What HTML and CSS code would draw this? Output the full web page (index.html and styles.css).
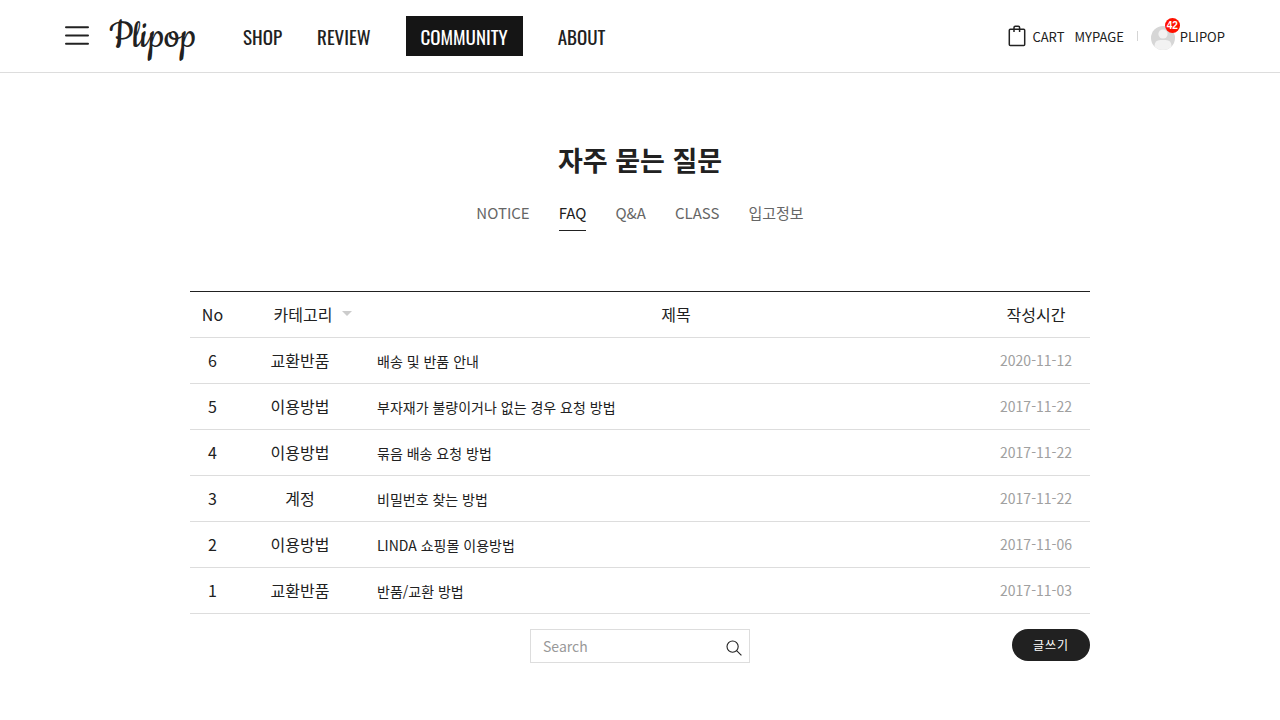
FILE: index.html
```
<!DOCTYPE html>
<html lang="ko">
<head>
    <meta charset="UTF-8">
    <meta name="viewport" content="width=device-width, initial-scale=1.0">
    <title>자주 묻는 질문 - Plipop</title>
    <link rel="stylesheet" href="styles.css">
</head>
<body>

<header class="header">
    <button type="button" class="menu-btn" aria-label="메뉴">
        <svg width="24" height="20" viewBox="0 0 24 20" fill="none" stroke="#222" stroke-width="2" stroke-linecap="round">
            <path d="M1 1.3h22M1 9.5h22M1 17.7h22"/>
        </svg>
    </button>
    <a href="#" class="logo">Plipop</a>
    <nav class="gnb">
        <a href="#">SHOP</a>
        <a href="#">REVIEW</a>
        <a href="#" class="active">COMMUNITY</a>
        <a href="#">ABOUT</a>
    </nav>
    <div class="user-menu">
        <a href="#" class="cart">
            <svg width="18" height="22" viewBox="0 0 18 22" fill="none" stroke="#222" stroke-width="1.5">
                <rect x="1.3" y="4.2" width="15.4" height="16.3" rx="1"/>
                <path d="M6 7V2.4Q6 1.2 7.2 1.2h3.2q1.2 0 1.2 1.2V7"/>
            </svg>
            CART
        </a>
        <a href="#">MYPAGE</a>
        <span class="bar"></span>
        <a href="#" class="profile">
            <span class="avatar">
                <svg width="24" height="24" viewBox="0 0 24 24">
                    <defs><clipPath id="round"><circle cx="12" cy="12" r="12"/></clipPath></defs>
                    <g clip-path="url(#round)">
                        <rect width="24" height="24" fill="#d6d6d6"/>
                        <circle cx="12" cy="8" r="4.6" fill="#f2f2f2"/>
                        <path d="M3.5 24V20q0-6 6-6h5q6 0 6 6v4z" fill="#f2f2f2"/>
                    </g>
                </svg>
                <span class="badge">42</span>
            </span>
            PLIPOP
        </a>
    </div>
</header>

<main class="container">
    <h1>자주 묻는 질문</h1>
    <nav class="tabs">
        <a href="#">NOTICE</a>
        <a href="#" class="active">FAQ</a>
        <a href="#">Q&amp;A</a>
        <a href="#">CLASS</a>
        <a href="#">입고정보</a>
    </nav>

    <table class="board">
        <thead>
            <tr>
                <th class="no">No</th>
                <th class="category"><button type="button" class="sort">카테고리<span class="arrow"></span></button></th>
                <th class="subject">제목</th>
                <th class="date">작성시간</th>
            </tr>
        </thead>
        <tbody>
            <tr>
                <td>6</td>
                <td>교환반품</td>
                <td class="subject"><a href="#">배송 및 반품 안내</a></td>
                <td class="date">2020-11-12</td>
            </tr>
            <tr>
                <td>5</td>
                <td>이용방법</td>
                <td class="subject"><a href="#">부자재가 불량이거나 없는 경우 요청 방법</a></td>
                <td class="date">2017-11-22</td>
            </tr>
            <tr>
                <td>4</td>
                <td>이용방법</td>
                <td class="subject"><a href="#">묶음 배송 요청 방법</a></td>
                <td class="date">2017-11-22</td>
            </tr>
            <tr>
                <td>3</td>
                <td>계정</td>
                <td class="subject"><a href="#">비밀번호 찾는 방법</a></td>
                <td class="date">2017-11-22</td>
            </tr>
            <tr>
                <td>2</td>
                <td>이용방법</td>
                <td class="subject"><a href="#">LINDA 쇼핑몰 이용방법</a></td>
                <td class="date">2017-11-06</td>
            </tr>
            <tr>
                <td>1</td>
                <td>교환반품</td>
                <td class="subject"><a href="#">반품/교환 방법</a></td>
                <td class="date">2017-11-03</td>
            </tr>
        </tbody>
    </table>

    <div class="board-bottom">
        <form class="search">
            <input type="text" placeholder="Search" aria-label="Search">
            <button type="button" aria-label="검색">
                <svg width="16" height="16" viewBox="0 0 16 16" fill="none" stroke="#222" stroke-width="1.1">
                    <circle cx="6.6" cy="6.6" r="5.6"/>
                    <path d="M10.6 10.6l4.8 4.8"/>
                </svg>
            </button>
        </form>
        <button type="button" class="write-btn">글쓰기</button>
    </div>
</main>

</body>
</html>
```
FILE: styles.css
```
* {
    box-sizing: border-box;
    margin: 0;
    padding: 0;
}
body {
    font-family: "Noto Sans CJK KR", sans-serif;
    font-size: 14px;
    color: #212121;
    background: #fff;
}
a {
    color: inherit;
    text-decoration: none;
}
button {
    font-family: inherit;
    color: inherit;
    background: none;
    border: 0;
    cursor: pointer;
}
svg {
    display: block;
}

/* header */
.header {
    display: flex;
    align-items: center;
    height: 73px;
    padding: 0 55px 0 65px;
    border-bottom: 1px solid #ddd;
}
.menu-btn {
    margin-right: 20px;
}
.logo {
    width: 88px;
    margin-right: 46px;
    padding-top: 2px;
    font-family: Cookie, "Liberation Serif", serif;
    font-size: 44px;
    line-height: 40px;
}
.gnb {
    display: flex;
    gap: 35px;
    font-family: Oswald, "Roboto Condensed", "Noto Sans CJK KR", sans-serif;
    font-size: 19px;
    line-height: 40px;
}
.gnb .active {
    padding: 0 15px;
    color: #fff;
    background: #151515;
}
.user-menu {
    display: flex;
    align-items: center;
    margin-left: auto;
    font-size: 13px;
}
.cart {
    display: flex;
    align-items: center;
    gap: 6px;
    margin-right: 10px;
}
.bar {
    width: 1px;
    height: 10px;
    margin: 0 13px;
    background: #d5d5d5;
}
.profile {
    display: flex;
    align-items: center;
    gap: 5px;
}
.avatar {
    position: relative;
    padding-top: 3px;
}
.badge {
    position: absolute;
    top: -5px;
    right: -5px;
    width: 15px;
    height: 15px;
    border-radius: 50%;
    background: #ff1100;
    color: #fff;
    font-family: "Liberation Sans", sans-serif;
    font-size: 10px;
    font-weight: bold;
    line-height: 15px;
    text-align: center;
}

/* content */
.container {
    max-width: 900px;
    margin: 0 auto;
    padding: 66px 0 56px;
}
h1 {
    font-size: 27px;
    line-height: 42px;
    text-align: center;
}
.tabs {
    display: flex;
    justify-content: center;
    gap: 29px;
    margin: 16px 0 60px;
    font-size: 15px;
    line-height: 31px;
    color: #666;
}
.tabs a {
    padding-bottom: 2px;
    border-bottom: 1px solid transparent;
}
.tabs .active {
    color: #212121;
    border-color: #212121;
}

/* board */
.board {
    width: 100%;
    border-collapse: separate;
    border-spacing: 0;
    border-top: 1px solid #212121;
    table-layout: fixed;
    font-size: 16px;
    line-height: 24px;
    text-align: center;
}
.board th,
.board td {
    height: 46px;
    padding-bottom: 2px;
    border-bottom: 1px solid #ddd;
    font-weight: normal;
}
.board th.no {
    width: 45px;
}
.board th.category {
    width: 130px;
}
.board th.date {
    width: 108px;
}
.board th.subject {
    padding-left: 5px;
}
.board td.subject {
    padding: 0 0 0 12px;
    font-size: 14px;
    text-align: left;
}
.board td.date {
    font-size: 14px;
    color: #a0a0a0;
}
.sort {
    display: inline-flex;
    align-items: center;
    gap: 10px;
    padding-left: 26px;
    font-size: 16px;
    line-height: 24px;
}
.arrow {
    border: 5px solid transparent;
    border-top-color: #ccc;
    border-bottom: 0;
}
.board-bottom {
    display: grid;
    grid-template-columns: 1fr 220px 1fr;
    align-items: start;
    margin-top: 15px;
}
.search {
    display: flex;
    grid-column: 2;
    height: 34px;
    border: 1px solid #ddd;
}
.search input {
    flex: 1;
    min-width: 0;
    padding-left: 12px;
    border: 0;
    outline: none;
    background: none;
    font-family: inherit;
    font-size: 14px;
}
.search input::placeholder {
    color: #999;
}
.search button {
    padding: 3px 7px 0;
}
.write-btn {
    justify-self: end;
    width: 78px;
    height: 32px;
    padding-bottom: 2px;
    border-radius: 16px;
    background: #212121;
    color: #fff;
    font-size: 12px;
    letter-spacing: 1px;
}
```
